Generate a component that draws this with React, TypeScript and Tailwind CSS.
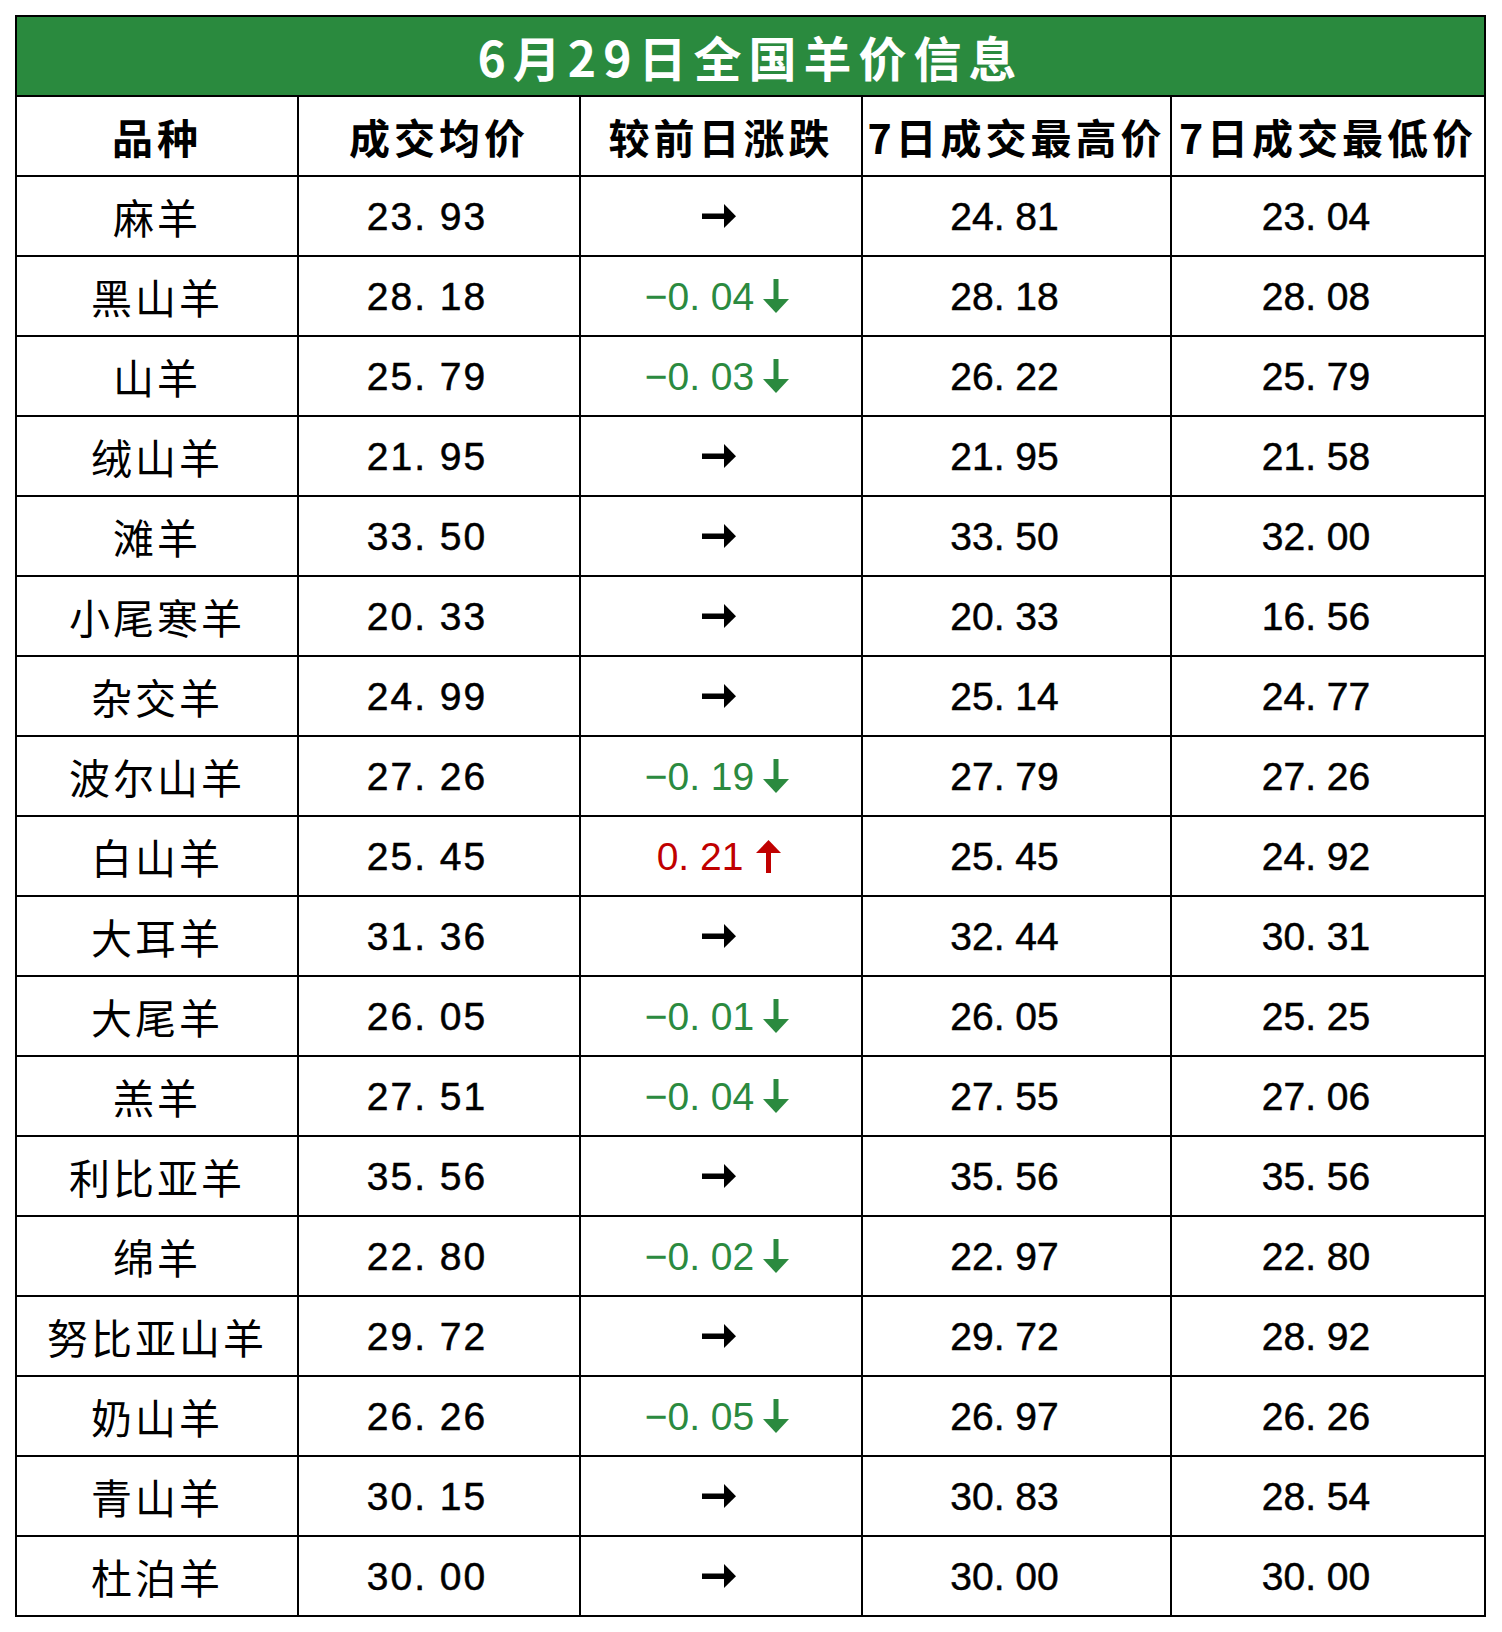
import React from "react";

type Change = { kind: "flat" } | { kind: "down"; value: string } | { kind: "up"; value: string };

interface Row {
  name: string;
  avg: string;
  change: Change;
  high: string;
  low: string;
}

const flat: Change = { kind: "flat" };
const down = (value: string): Change => ({ kind: "down", value });
const up = (value: string): Change => ({ kind: "up", value });

const rows: Row[] = [
  { name: "麻羊", avg: "23. 93", change: flat, high: "24. 81", low: "23. 04" },
  { name: "黑山羊", avg: "28. 18", change: down("−0. 04"), high: "28. 18", low: "28. 08" },
  { name: "山羊", avg: "25. 79", change: down("−0. 03"), high: "26. 22", low: "25. 79" },
  { name: "绒山羊", avg: "21. 95", change: flat, high: "21. 95", low: "21. 58" },
  { name: "滩羊", avg: "33. 50", change: flat, high: "33. 50", low: "32. 00" },
  { name: "小尾寒羊", avg: "20. 33", change: flat, high: "20. 33", low: "16. 56" },
  { name: "杂交羊", avg: "24. 99", change: flat, high: "25. 14", low: "24. 77" },
  { name: "波尔山羊", avg: "27. 26", change: down("−0. 19"), high: "27. 79", low: "27. 26" },
  { name: "白山羊", avg: "25. 45", change: up("0. 21"), high: "25. 45", low: "24. 92" },
  { name: "大耳羊", avg: "31. 36", change: flat, high: "32. 44", low: "30. 31" },
  { name: "大尾羊", avg: "26. 05", change: down("−0. 01"), high: "26. 05", low: "25. 25" },
  { name: "羔羊", avg: "27. 51", change: down("−0. 04"), high: "27. 55", low: "27. 06" },
  { name: "利比亚羊", avg: "35. 56", change: flat, high: "35. 56", low: "35. 56" },
  { name: "绵羊", avg: "22. 80", change: down("−0. 02"), high: "22. 97", low: "22. 80" },
  { name: "努比亚山羊", avg: "29. 72", change: flat, high: "29. 72", low: "28. 92" },
  { name: "奶山羊", avg: "26. 26", change: down("−0. 05"), high: "26. 97", low: "26. 26" },
  { name: "青山羊", avg: "30. 15", change: flat, high: "30. 83", low: "28. 54" },
  { name: "杜泊羊", avg: "30. 00", change: flat, high: "30. 00", low: "30. 00" },
];

const headers = ["品种", "成交均价", "较前日涨跌", "7日成交最高价", "7日成交最低价"];

const cjk = "font-['Noto_Sans_CJK_SC','Noto_Sans',sans-serif]";
const num = "font-['Liberation_Sans','Noto_Sans_CJK_SC',sans-serif]";

function ArrowRight() {
  return (
    <svg width="34" height="24" viewBox="0 0 34 24" className="block">
      <rect x="0" y="9.5" width="24" height="5.5" fill="#000" />
      <polygon points="22,0 34,12.2 22,24" fill="#000" />
    </svg>
  );
}

function ArrowDown() {
  return (
    <svg width="26" height="34" viewBox="0 0 26 34" className="block">
      <rect x="10.5" y="0" width="5" height="22" fill="#2b8a3f" />
      <polygon points="0,20 26,20 13,34" fill="#2b8a3f" />
    </svg>
  );
}

function ArrowUp() {
  return (
    <svg width="25" height="33" viewBox="0 0 25 33" className="block">
      <polygon points="12.5,0 25,13 0,13" fill="#c00000" />
      <rect x="10" y="12" width="5" height="21" fill="#c00000" />
    </svg>
  );
}

function ChangeCell({ change }: { change: Change }) {
  if (change.kind === "flat") {
    return (
      <div className="flex items-center justify-center pr-[4px]">
        <ArrowRight />
      </div>
    );
  }
  if (change.kind === "down") {
    return (
      <div className="flex items-center justify-center pr-[8px]">
        <span className={`${num} text-[39px] leading-none text-[#2b8a3f]`}>{change.value}</span>
        <span className="ml-[9px]">
          <ArrowDown />
        </span>
      </div>
    );
  }
  return (
    <div className="flex items-center justify-center pr-[4px]">
      <span className={`${num} text-[39px] leading-none text-[#c00000]`}>{change.value}</span>
      <span className="ml-[13px]">
        <ArrowUp />
      </span>
    </div>
  );
}

const cell = "h-[80px] border-r-2 border-b-2 border-black flex items-center justify-center";
const avgText = `${num} text-[39px] leading-none tracking-[2px] text-black [-webkit-text-stroke:0.5px_black] pr-[24px]`;
const weekText = `${num} text-[39px] leading-none tracking-[0px] text-black [-webkit-text-stroke:0.5px_black] pr-[24px]`;

export default function App() {
  return (
    <div className="w-[1502px] h-[1632px] bg-white pt-[15px] pl-[15px]">
      <div className="w-[1471px] border-l-2 border-t-2 border-black">
        <div className="h-[80px] border-r-2 border-b-2 border-black bg-[#2a8a3e] flex items-center justify-center">
          <span className={`${cjk} text-[48px] font-bold leading-none tracking-[7px] text-white`}>
            6月29日全国羊价信息
          </span>
        </div>
        <div className="grid grid-cols-[282px_282px_282px_309px_314px]">
          {headers.map((h) => (
            <div key={h} className={cell}>
              <span className={`${cjk} text-[41px] font-bold leading-none tracking-[4px] text-black`}>{h}</span>
            </div>
          ))}
          {rows.map((r) => (
            <React.Fragment key={r.name}>
              <div className={cell}>
                <span className={`${cjk} text-[41px] leading-none tracking-[3px] text-black`}>{r.name}</span>
              </div>
              <div className={cell}>
                <span className={avgText}>{r.avg}</span>
              </div>
              <div className={cell}>
                <ChangeCell change={r.change} />
              </div>
              <div className={cell}>
                <span className={weekText}>{r.high}</span>
              </div>
              <div className={cell}>
                <span className={weekText}>{r.low}</span>
              </div>
            </React.Fragment>
          ))}
        </div>
      </div>
    </div>
  );
}
